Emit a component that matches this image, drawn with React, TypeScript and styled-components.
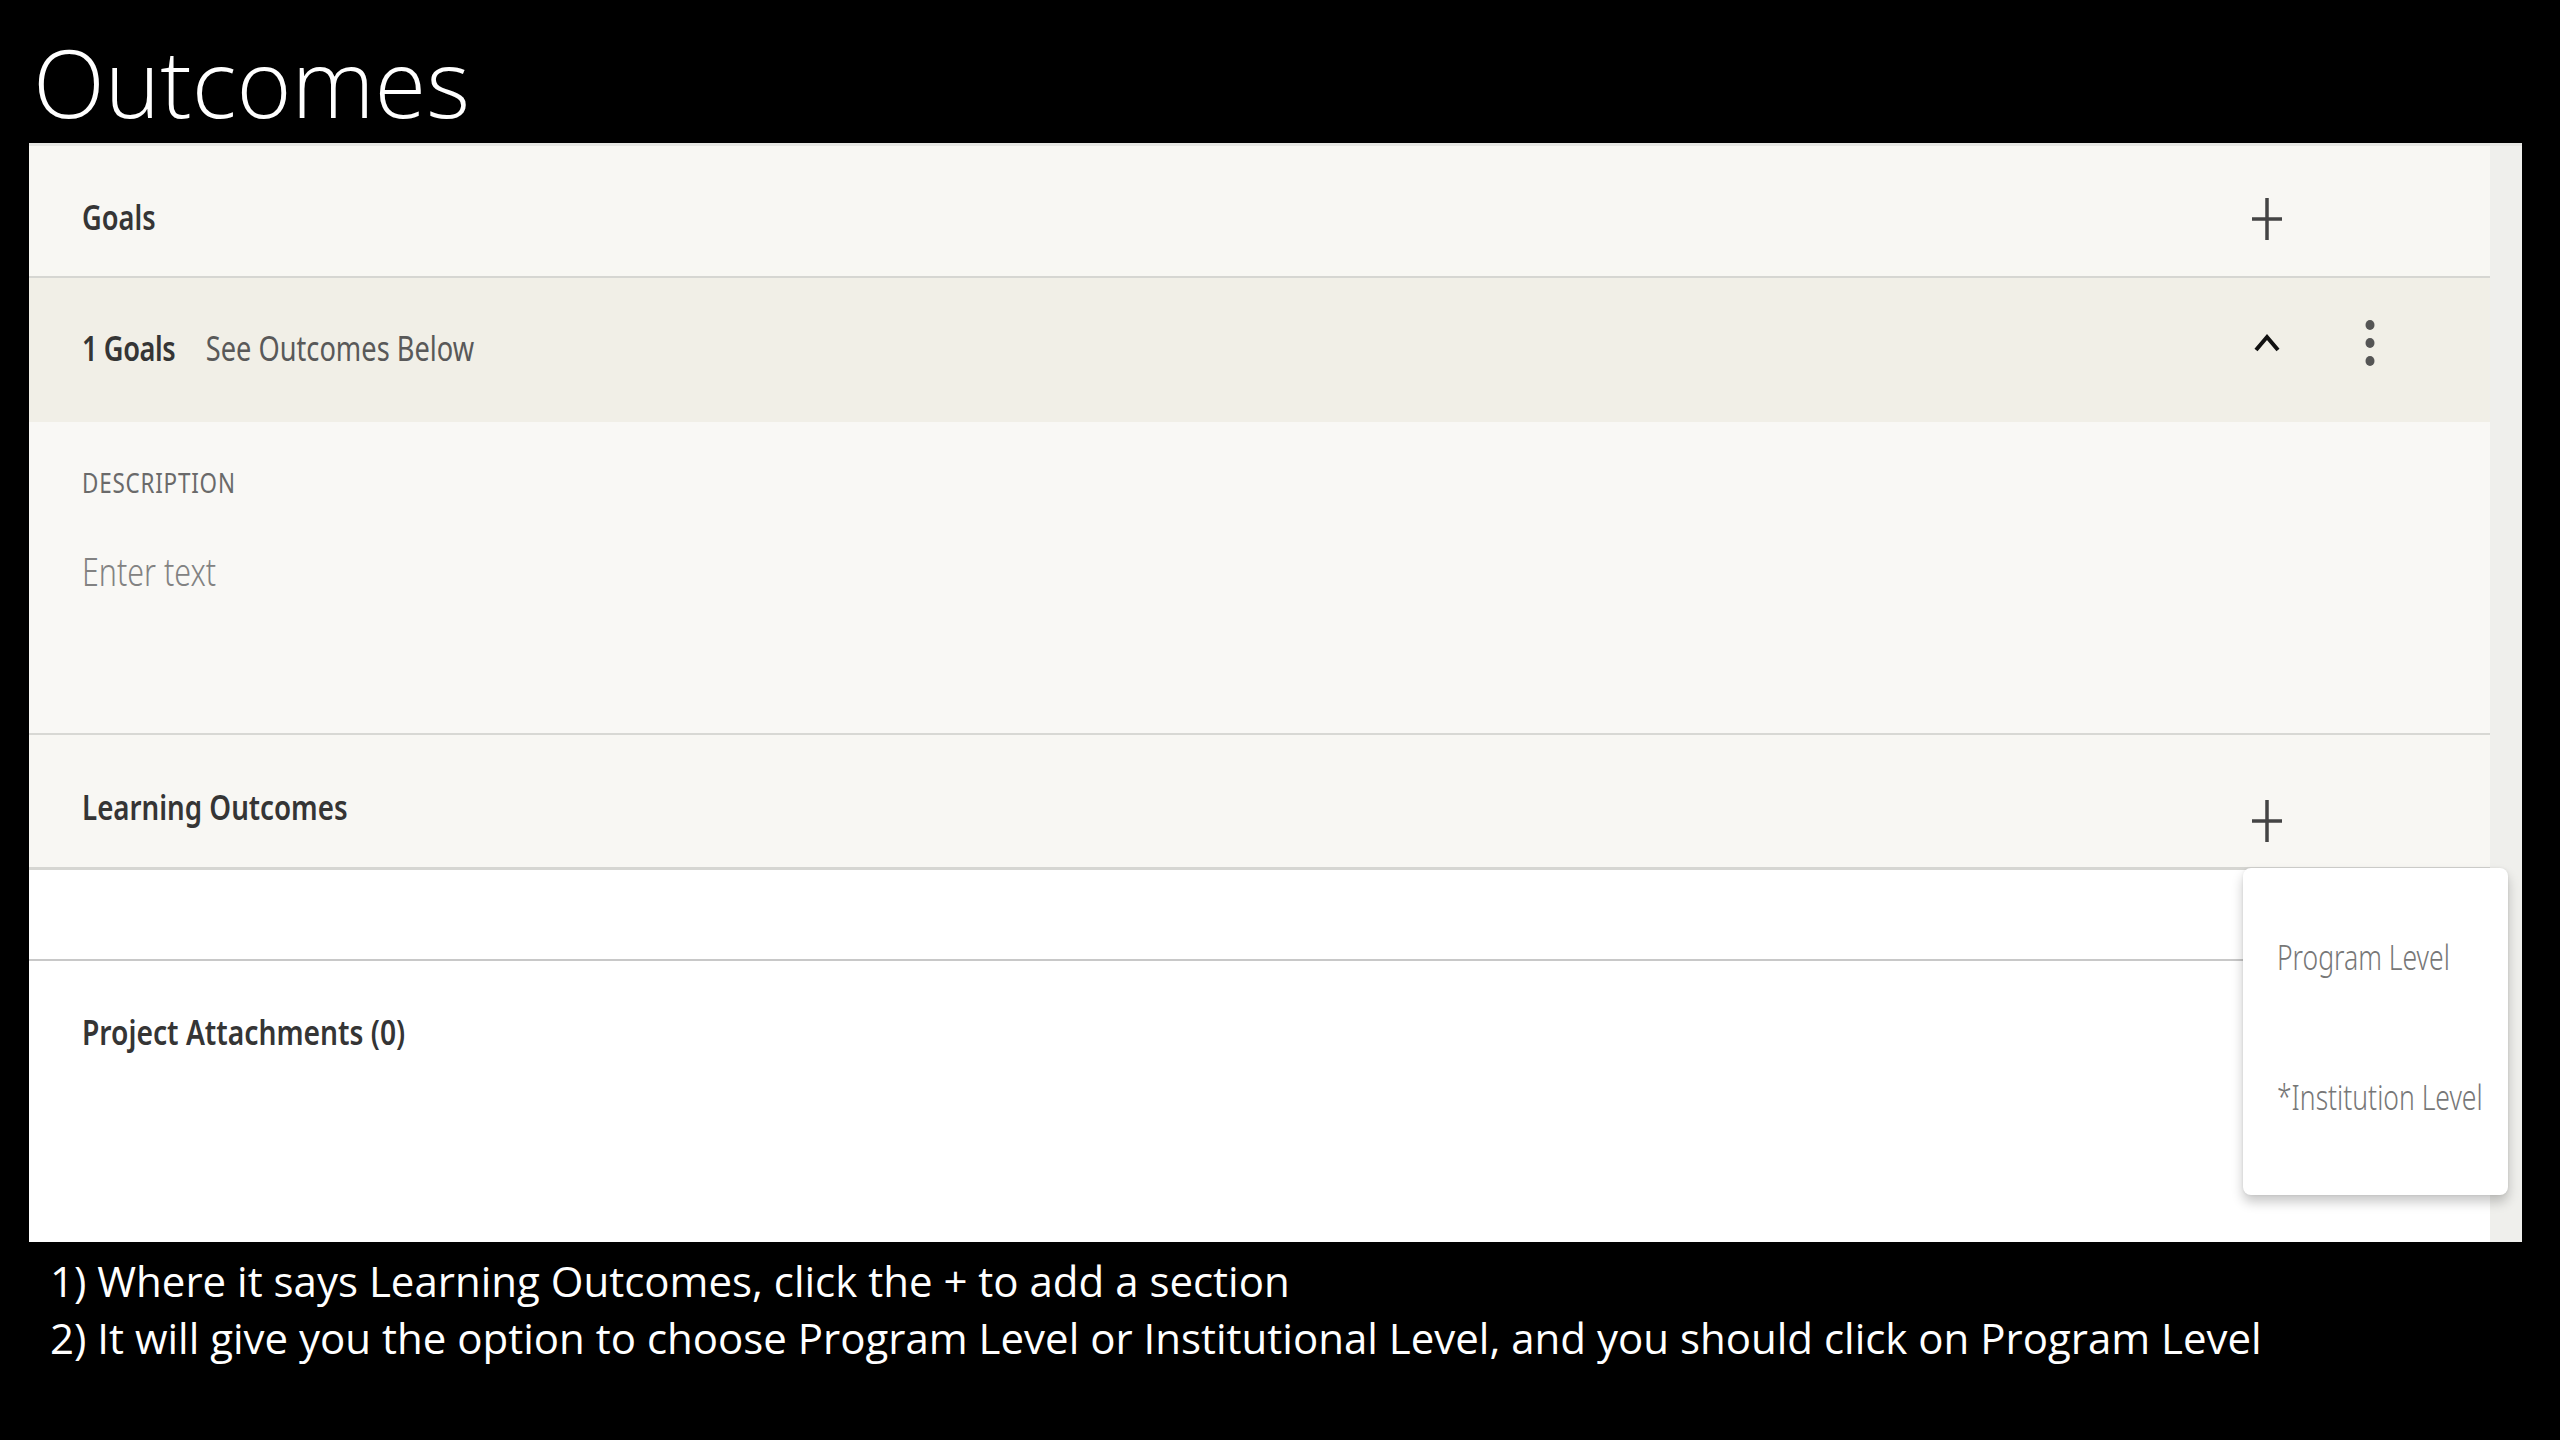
import React from "react";
import styled, { createGlobalStyle, css } from "styled-components";

const Global = createGlobalStyle`
  html, body { margin: 0; padding: 0; background: #000; }
  body { width: 2560px; height: 1440px; overflow: hidden; }
`;

const Page = styled.div`
  width: 2560px;
  height: 1440px;
  box-sizing: border-box;
  background: #000;
  padding: 36px 38px 0 29px;
  display: flex;
  flex-direction: column;
`;

const Title = styled.h1`
  margin: 0 0 0 4px;
  font-family: "Open Sans", sans-serif;
  font-weight: 300;
  font-size: 94px;
  line-height: 92px;
  color: #fff;
`;

const Panel = styled.section`
  margin-top: 15px;
  height: 1099px;
  flex: none;
  display: flex;
  box-sizing: border-box;
  border-top: 3px solid #e6e6e3;
  background: #fff;
`;

const Content = styled.div`
  flex: 1;
  min-width: 0;
  display: flex;
  flex-direction: column;
`;

const ScrollTrack = styled.div`
  width: 32px;
  flex: none;
  background: #efefec;
`;

const HeaderRow = styled.div<{ $h: number; $border: number }>`
  height: ${(p) => p.$h}px;
  box-sizing: border-box;
  flex: none;
  display: flex;
  align-items: center;
  justify-content: space-between;
  padding: 12px 90px 0 53px;
  background: #f8f7f3;
  border-bottom: ${(p) => p.$border}px solid #d6d6d2;
`;

const GoalRow = styled.div`
  height: 144px;
  flex: none;
  box-sizing: border-box;
  display: flex;
  align-items: center;
  justify-content: space-between;
  padding: 0 90px 4px 53px;
  background: #f1efe7;
`;

/* The app's UI face is a narrow humanist sans: approximate it by squeezing Noto Sans. */
const condensed = css`
  font-family: "Noto Sans", "Open Sans", sans-serif;
  display: inline-block;
  transform: scaleX(0.8);
  transform-origin: 0 50%;
  white-space: nowrap;
`;

const SectionTitle = styled.h2<{ $squeeze?: number }>`
  margin: 0;
  ${condensed}
  transform: scaleX(${(p) => p.$squeeze ?? 0.8});
  font-weight: 600;
  font-size: 34px;
  line-height: 34px;
  color: #353535;
`;

const GoalSummary = styled.div`
  ${condensed}
  display: flex;
  align-items: baseline;
  gap: 38px;
`;

const GoalCount = styled.span`
  font-weight: 600;
  font-size: 34px;
  line-height: 34px;
  letter-spacing: -0.5px;
  color: #353535;
`;

const GoalName = styled.span`
  font-weight: 400;
  font-size: 34px;
  line-height: 34px;
  color: #595959;
`;

const Description = styled.div`
  height: 313px;
  flex: none;
  box-sizing: border-box;
  padding: 46px 53px 0;
  background: #f9f8f5;
  border-bottom: 2px solid #d8d8d4;
  display: flex;
  flex-direction: column;
  align-items: flex-start;
`;

const FieldLabel = styled.div`
  ${condensed}
  font-weight: 400;
  font-size: 28px;
  line-height: 28px;
  letter-spacing: 1px;
  color: #6a6a6a;
`;

const Placeholder = styled.div`
  margin-top: 56px;
  ${condensed}
  font-weight: 300;
  font-size: 38px;
  line-height: 38px;
  color: #828282;
`;

const Spacer = styled.div`
  height: 91px;
  flex: none;
  box-sizing: border-box;
  background: #fff;
  border-bottom: 2px solid #c8c8c8;
`;

const Attachments = styled.div`
  flex: 1;
  padding: 54px 53px 0;
  background: #fff;
`;

const Actions = styled.div<{ $shift?: number }>`
  display: grid;
  grid-template-columns: 60px 60px;
  column-gap: 43px;
  align-items: center;
  margin-top: ${(p) => p.$shift ?? 0}px;
`;

const IconSlot = styled.div`
  position: relative;
  width: 60px;
  height: 60px;
  display: flex;
  align-items: center;
  justify-content: center;
`;

const Menu = styled.ul`
  position: absolute;
  top: calc(100% + 17px);
  left: 6px;
  width: 265px;
  height: 327px;
  box-sizing: border-box;
  margin: 0;
  padding: 19px 0 28px;
  list-style: none;
  background: #fff;
  border-radius: 8px;
  box-shadow: 0 7px 12px rgba(0, 0, 0, 0.22), 0 0 3px rgba(0, 0, 0, 0.08);
  z-index: 5;
`;

const MenuItem = styled.li`
  height: 140px;
  display: flex;
  align-items: center;
  padding-left: 34px;
`;

const MenuLabel = styled.span`
  ${condensed}
  transform: scaleX(0.78);
  font-weight: 300;
  font-size: 34px;
  line-height: 34px;
  color: #777;
`;

const Notes = styled.div`
  margin: 10px 0 0 21px;
  font-family: "Open Sans", sans-serif;
  font-size: 42px;
  line-height: 57px;
  color: #fff;
  white-space: nowrap;
`;

const PlusIcon = () => (
  <svg width="30" height="42" viewBox="0 0 30 42">
    <path d="M15 0V42M0 21H30" stroke="#444" strokeWidth="3.5" fill="none" />
  </svg>
);

const ChevronUpIcon = () => (
  <svg width="26" height="20" viewBox="0 0 26 20">
    <polyline points="2,17 13,4 24,17" stroke="#111" strokeWidth="4" fill="none" />
  </svg>
);

const KebabIcon = () => (
  <svg width="12" height="46" viewBox="0 0 12 46">
    <ellipse cx="6" cy="5" rx="4.5" ry="5" fill="#555" />
    <ellipse cx="6" cy="23" rx="4.5" ry="5" fill="#555" />
    <ellipse cx="6" cy="41" rx="4.5" ry="5" fill="#555" />
  </svg>
);

export default function App() {
  return (
    <Page>
      <Global />
      <Title>Outcomes</Title>
      <Panel>
        <Content>
          <HeaderRow $h={132} $border={2}>
            <SectionTitle>Goals</SectionTitle>
            <Actions $shift={4}>
              <IconSlot>
                <PlusIcon />
              </IconSlot>
            </Actions>
          </HeaderRow>
          <GoalRow>
            <GoalSummary>
              <GoalCount>1 Goals</GoalCount>
              <GoalName>See Outcomes Below</GoalName>
            </GoalSummary>
            <Actions $shift={-10}>
              <IconSlot>
                <ChevronUpIcon />
              </IconSlot>
              <IconSlot>
                <KebabIcon />
              </IconSlot>
            </Actions>
          </GoalRow>
          <Description>
            <FieldLabel>DESCRIPTION</FieldLabel>
            <Placeholder>Enter text</Placeholder>
          </Description>
          <HeaderRow $h={135} $border={3}>
            <SectionTitle $squeeze={0.815}>Learning Outcomes</SectionTitle>
            <Actions $shift={28}>
              <IconSlot>
                <PlusIcon />
                <Menu>
                  <MenuItem>
                    <MenuLabel>Program Level</MenuLabel>
                  </MenuItem>
                  <MenuItem>
                    <MenuLabel>*Institution Level</MenuLabel>
                  </MenuItem>
                </Menu>
              </IconSlot>
            </Actions>
          </HeaderRow>
          <Spacer />
          <Attachments>
            <SectionTitle $squeeze={0.83}>Project Attachments (0)</SectionTitle>
          </Attachments>
        </Content>
        <ScrollTrack />
      </Panel>
      <Notes>
        <div>1) Where it says Learning Outcomes, click the + to add a section</div>
        <div>
          2) It will give you the option to choose Program Level or Institutional Level, and you should click on Program Level
        </div>
      </Notes>
    </Page>
  );
}
